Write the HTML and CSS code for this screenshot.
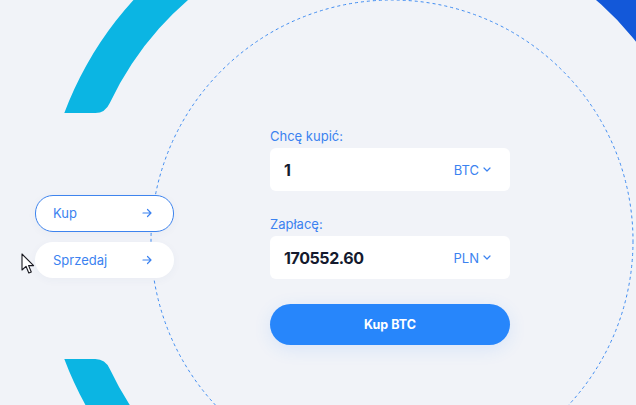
FILE: index.html
```html
<!DOCTYPE html>
<html lang="pl">
<head>
<meta charset="utf-8">
<title>Kup BTC</title>
<link rel="stylesheet" href="styles.css">
</head>
<body>
<div class="page">
  <svg class="backdrop" width="636" height="405" viewBox="0 0 636 405" aria-hidden="true">
    <defs>
      <linearGradient id="ringTop" gradientUnits="userSpaceOnUse" x1="200" y1="0" x2="580" y2="0">
        <stop offset="0" stop-color="#0bb5e3"/>
        <stop offset="0.45" stop-color="#0a9fe0"/>
        <stop offset="1" stop-color="#1358d9"/>
      </linearGradient>
    </defs>
    <path fill="url(#ringTop)" d="M64.3 113 A350 350 0 0 1 719.7 113 L678.7 113 A312 312 0 0 0 109.8 103 Q105.3 113 95.3 113 Z"/>
    <path fill="#0bb5e3" d="M64.3 359 A350 350 0 0 0 392 586 L392 548 A312 312 0 0 1 109.8 369 Q105.3 359 95.3 359 Z"/>
    <circle cx="392" cy="241" r="241" fill="none" stroke="#3f8cf2" stroke-width="1" stroke-dasharray="3 3"/>
  </svg>

  <nav class="side">
    <a class="pill pill-active" href="#">Kup<svg class="arrow" width="10" height="10" viewBox="0 0 10 10"><path d="M1 5h8M5.5 1.5 9 5l-3.5 3.5" fill="none" stroke="currentColor" stroke-width="1.2" stroke-linecap="round" stroke-linejoin="round"/></svg></a>
    <a class="pill" href="#">Sprzedaj<svg class="arrow" width="10" height="10" viewBox="0 0 10 10"><path d="M1 5h8M5.5 1.5 9 5l-3.5 3.5" fill="none" stroke="currentColor" stroke-width="1.2" stroke-linecap="round" stroke-linejoin="round"/></svg></a>
  </nav>

  <form class="exchange">
    <label class="label">Chcę kupić:</label>
    <div class="field">
      <span class="value">1</span>
      <span class="currency">BTC<svg class="chev" width="8" height="5" viewBox="0 0 8 5"><path d="M1 1l3 3 3-3" fill="none" stroke="currentColor" stroke-width="1.2" stroke-linecap="round" stroke-linejoin="round"/></svg></span>
    </div>
    <label class="label label-second">Zapłacę:</label>
    <div class="field">
      <span class="value">170552.60</span>
      <span class="currency">PLN<svg class="chev" width="8" height="5" viewBox="0 0 8 5"><path d="M1 1l3 3 3-3" fill="none" stroke="currentColor" stroke-width="1.2" stroke-linecap="round" stroke-linejoin="round"/></svg></span>
    </div>
    <button class="buy" type="button">Kup BTC</button>
  </form>

  <svg class="cursor" width="14" height="22" viewBox="0 0 14 22" aria-hidden="true">
    <path d="M1 1 L1 17 L5 13.3 L7.8 20 L10.3 19 L7.6 12.6 L12.6 12.6 Z" fill="#ffffff" stroke="#1a1a22" stroke-width="1.1" stroke-linejoin="round"/>
  </svg>
</div>
</body>
</html>
```

FILE: styles.css
```css
* { box-sizing: border-box; }

html, body {
  margin: 0;
  padding: 0;
  background: #f1f3f8;
}

body {
  font-family: Inter, "Noto Sans", "Liberation Sans", sans-serif;
  color: #3b82f0;
}

.page {
  position: relative;
  width: 636px;
  height: 405px;
  overflow: hidden;
  display: flex;
  align-items: center;
  padding: 68px 0 0 35px;
}

.backdrop {
  position: absolute;
  left: 0;
  top: 0;
}

.side {
  position: relative;
  width: 139px;
  margin-top: -1px;
  display: flex;
  flex-direction: column;
  gap: 10px;
}

.pill {
  height: 36px;
  border-radius: 18px;
  background: #ffffff;
  border: 1px solid transparent;
  display: flex;
  align-items: center;
  justify-content: space-between;
  padding: 0 21px 0 17px;
  font-size: 13px;
  color: #3b82f0;
  text-decoration: none;
  box-shadow: 0 2px 10px rgba(40, 70, 140, 0.04);
}

.pill-active {
  height: 37px;
  border-color: #3e84ee;
}

.arrow { display: block; }

.exchange {
  position: relative;
  margin-left: 96px;
  width: 240px;
  display: flex;
  flex-direction: column;
}

.label {
  font-size: 13px;
  line-height: 16px;
  color: #3b82f0;
  margin-bottom: 4px;
}

.label-second { margin-top: 25px; }

.field {
  height: 43px;
  background: #ffffff;
  border-radius: 6px;
  display: flex;
  align-items: center;
  justify-content: space-between;
  padding: 0 19px 0 14px;
}

.value {
  font-size: 16px;
  font-weight: 700;
  color: #141a2e;
  letter-spacing: -0.4px;
}

.currency {
  display: flex;
  align-items: center;
  gap: 4px;
  font-size: 13px;
  color: #3b82f0;
}

.chev { display: block; }

.buy {
  margin-top: 25px;
  height: 41px;
  border: 0;
  border-radius: 21px;
  background: #2786fb;
  color: #ffffff;
  font-family: inherit;
  font-size: 12.5px;
  font-weight: 700;
  box-shadow: 0 4px 18px rgba(39, 134, 251, 0.12);
}

.cursor {
  position: absolute;
  left: 21px;
  top: 253px;
}
```
